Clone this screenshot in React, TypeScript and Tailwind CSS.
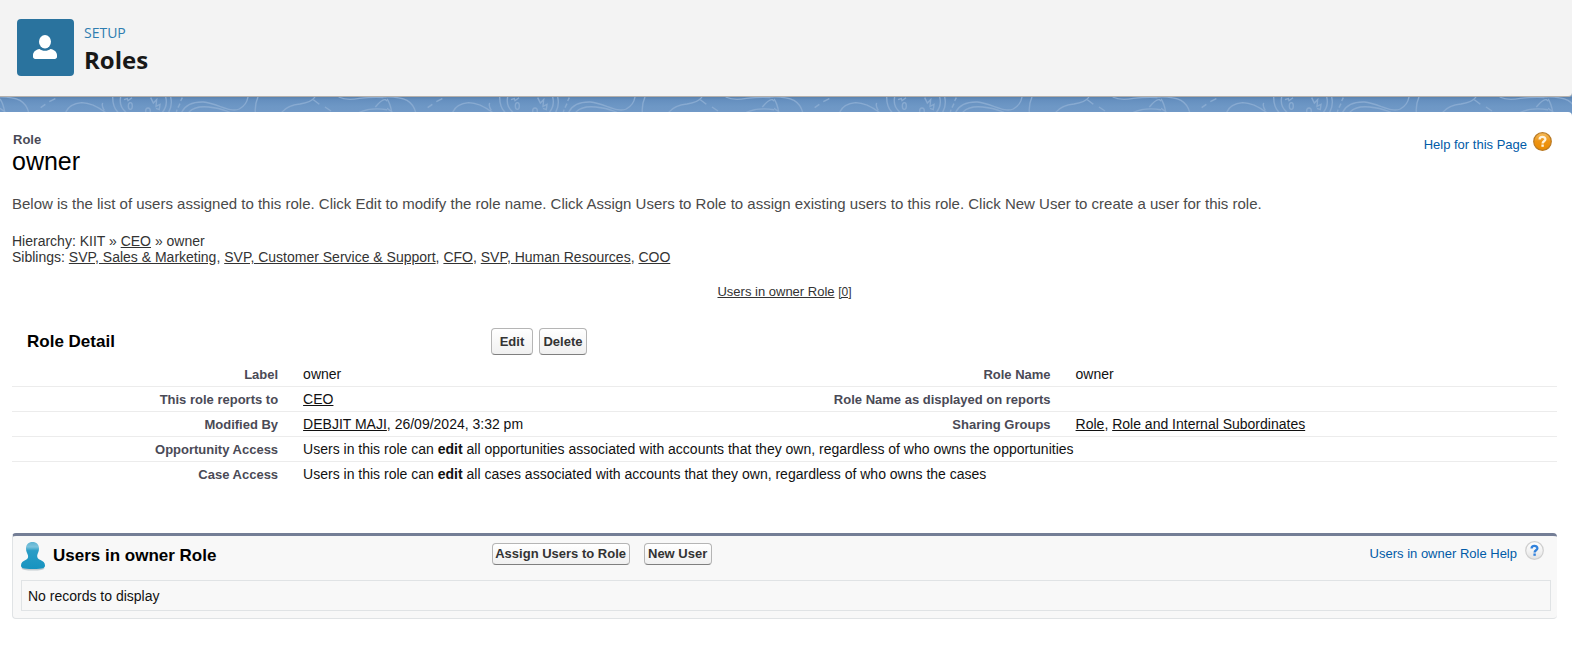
import type { ReactNode } from "react";

const link = "underline underline-offset-1";

function A({ children }: { children: ReactNode }) {
  return (
    <a href="#" className={link}>
      {children}
    </a>
  );
}

function UserIcon() {
  return (
    <span className="size-[57px] rounded bg-[#2a739e] p-4">
      <svg viewBox="0 0 24 24" className="size-6" fill="#fff" aria-hidden="true">
        <ellipse cx="12" cy="6.7" rx="6" ry="6.7" />
        <path d="M6.500 14C8 15.200 9.800 15.800 12 15.800S16 15.200 17.500 14C21.200 14.600 24 17 24 20.200V21.800C24 23.100 23 24 21.800 24H2.200C1 24 0 23.100 0 21.800V20.200C0 17 2.800 14.600 6.500 14z" />
      </svg>
    </span>
  );
}

function MapStrip() {
  return (
    <svg className="block h-[15px] w-full" aria-hidden="true">
      <defs>
        <linearGradient id="sky" x1="0" y1="0" x2="0" y2="1">
          <stop offset="0" stopColor="#5b82ad" />
          <stop offset="0.2" stopColor="#658fbf" />
          <stop offset="0.6" stopColor="#6d97c5" />
          <stop offset="1" stopColor="#7199c7" />
        </linearGradient>
        <pattern id="map" width="387" height="15" patternUnits="userSpaceOnUse">
          <g transform="scale(0.33333)" fill="none" stroke="#88aad1" strokeWidth="4">
            <path d="M0 6Q10 20 14 45M0 34L16 45" />
            <path d="M-22 0Q35 -2 60 10Q80 22 86 46" />
            <path d="M1139 0Q1165 0 1161 2" />
            <path d="M122 32l14 -10M148 14l18 -9" />
            <path d="M197 46Q208 20 245 17Q278 18 316 46M308 18Q304 28 313 40" />
            <path d="M338 0Q338 30 354 46M362 0Q356 28 378 46" />
            <ellipse cx="391" cy="27" rx="6" ry="10" />
            <path d="M372 8l10 -3l2 6l12 -9M452 2l8 16l10 -10l-2 20l12 -6l-2 16l-10 -4" />
            <ellipse cx="444" cy="42" rx="7" ry="9" />
            <path d="M497 0Q504 26 487 46M512 0Q518 26 506 46" />
            <path d="M547 2l-5 10M540 20l-6 12M531 38l-2 8" />
            <path d="M545 46Q560 14 610 15C655 20 690 48 718 36Q740 24 744 0" />
            <path d="M566 46Q584 26 626 30Q660 33 690 46" />
            <path d="M774 0Q764 22 766 46" />
            <path d="M845 46Q864 24 900 21Q935 16 945 0" />
            <path d="M940 8l18 14M975 30l18 12" />
            <path d="M1016 0Q1040 12 1078 4Q1120 0 1150 2" />
            <path d="M1078 46Q1120 28 1180 42" />
            <path d="M1126 30Q1146 6 1156 8Q1170 16 1174 40" />
          </g>
        </pattern>
      </defs>
      <rect width="100%" height="15" fill="url(#sky)" />
      <rect width="100%" height="15" fill="url(#map)" />
    </svg>
  );
}

function HelpBall({ tone }: { tone: "orange" | "gray" }) {
  const orange = tone === "orange";
  return (
    <svg viewBox="0 0 19 19" className="size-[19px]" aria-hidden="true">
      <defs>
        <linearGradient id={"ball-" + tone} x1="0" y1="0" x2="0" y2="1">
          <stop offset="0" stopColor={orange ? "#f6bd5c" : "#ffffff"} />
          <stop offset="0.5" stopColor={orange ? "#ee9413" : "#f3f3f3"} />
          <stop offset="1" stopColor={orange ? "#e98a00" : "#e2e2e2"} />
        </linearGradient>
      </defs>
      <circle cx="9.500" cy="9.500" r="8.800" fill={`url(#ball-${tone})`} stroke={orange ? "#b97a25" : "#cfcfcf"} strokeWidth="1.200" />
      <path
        d="M6.600 7.400C6.600 4.200 12.400 4.200 12.400 7.200C12.400 9.300 9.600 9.200 9.600 11.400"
        fill="none"
        stroke={orange ? "#fff3dc" : "#3282dc"}
        strokeWidth="2.300"
      />
      <rect x="8.400" y="12.500" width="2.400" height="2.300" fill={orange ? "#fff3dc" : "#3282dc"} />
    </svg>
  );
}

function PersonIcon() {
  return (
    <svg viewBox="1 0 25 30" className="h-[30px] w-[25px]" aria-hidden="true">
      <defs>
        <linearGradient id="person" x1="0" y1="0" x2="0" y2="1">
          <stop offset="0" stopColor="#5fb3d2" />
          <stop offset="0.18" stopColor="#7cc3dc" />
          <stop offset="0.32" stopColor="#2a9dc6" />
          <stop offset="1" stopColor="#1793c0" />
        </linearGradient>
      </defs>
      <ellipse cx="13" cy="27.500" rx="11.500" ry="2" fill="#c3cbd0" />
      <path
        d="M12.500 1C8.500 1 6 3.500 6 7.500C6 11 7.500 12.500 8 14.500C8.500 17 7.500 18 5.500 19C3 20.200 1 21.500 1 24.500C1 27 2.500 28 13 28S25 27 25 24.500C25 21.500 23 20.200 20.500 19C18 18 17 17 17.200 14.500C17.500 12.500 19 11 19 7.500C19 3.500 16.500 1 12.500 1z"
        fill="url(#person)"
      />
    </svg>
  );
}

function Button({ children, className }: { children: ReactNode; className: string }) {
  return (
    <button
      type="button"
      className={
        "rounded-[4px] border border-[#b5b5b5] border-b-[#7f7f7f] bg-linear-to-b from-white to-[#f0f0f0] pt-px text-[13px] font-bold text-[#333] " +
        className
      }
    >
      {children}
    </button>
  );
}

const th = "pr-3 pt-px text-right align-top text-[13px] leading-[23px] font-bold text-[#4a4a56]";
const td = "pl-[13px] pt-px align-top leading-[23px]";

function Access({ what }: { what: string }) {
  return (
    <>
      Users in this role can <b>edit</b> all {what} associated with accounts that they own, regardless of who owns the {what}
    </>
  );
}

export default function App() {
  return (
    <div className="min-h-screen bg-white font-['Liberation_Sans',Arial,sans-serif] text-sm text-[#111]">
      <div className="bg-[#6d97c5]">
        <header className="flex h-[97px] items-start gap-[10px] rounded-br border-b border-[#b4b0ac] bg-[#f3f3f3] pt-[19px] pl-[17px]">
          <UserIcon />
          <div className="pt-[3px] font-['Open_Sans','Noto_Sans',sans-serif]">
            <p className="text-sm leading-[22px] text-[#2f7db0]">SETUP</p>
            <h1 className="text-2xl leading-8 font-bold text-[#181818]">Roles</h1>
          </div>
        </header>
        <MapStrip />
        <div className="h-1 rounded-tr bg-white" />
      </div>

      <main className="pt-4 pr-[15px] pl-3">
        <div className="flex items-start justify-between">
          <div>
            <p className="pl-px text-[13px] leading-4 font-bold text-[#4a4a56]">Role</p>
            <h2 className="text-[25px] leading-[27px] text-black">owner</h2>
          </div>
          <a href="#" className="flex gap-[6px] pr-[5px] text-[13px] leading-[26px] text-[#015ba7]">
            Help for this Page
            <HelpBall tone="orange" />
          </a>
        </div>

        <p className="mt-5 text-[15px] leading-[18px] text-[#4a4a4a]">
          Below is the list of users assigned to this role. Click Edit to modify the role name. Click Assign Users to Role
          to assign existing users to this role. Click New User to create a user for this role.
        </p>

        <div className="mt-5 leading-4 text-[#333]">
          <p>
            Hierarchy: KIIT » <A>CEO</A> » owner
          </p>
          <p>
            Siblings: <A>SVP, Sales &amp; Marketing</A>, <A>SVP, Customer Service &amp; Support</A>, <A>CFO</A>,{" "}
            <A>SVP, Human Resources</A>, <A>COO</A>
          </p>
        </div>

        <p className="mt-[19px] text-center text-[13px] leading-4 text-[#333]">
          <a href="#" className={link}>
            Users in owner Role
          </a>{" "}
          <a href="#" className="text-xs underline underline-offset-1">
            [0]
          </a>
        </p>

        <section className="mt-7">
          <div className="flex items-center">
            <h3 className="w-[31%] pl-[15px] text-[17px] leading-6 font-bold text-black">Role Detail</h3>
            <div className="flex gap-[6px]">
              <Button className="h-[27px] w-[42px]">Edit</Button>
              <Button className="h-[27px] w-12">Delete</Button>
            </div>
          </div>
          <table className="mt-[7px] w-full table-fixed border-collapse">
            <colgroup>
              <col className="w-[18%]" />
              <col className="w-[32%]" />
              <col className="w-[18%]" />
              <col className="w-[32%]" />
            </colgroup>
            <tbody className="divide-y divide-[#ececec]">
              <tr>
                <th className={th}>Label</th>
                <td className={td}>owner</td>
                <th className={th}>Role Name</th>
                <td className={td}>owner</td>
              </tr>
              <tr>
                <th className={th}>This role reports to</th>
                <td className={td}>
                  <A>CEO</A>
                </td>
                <th className={th}>Role Name as displayed on reports</th>
                <td className={td} />
              </tr>
              <tr>
                <th className={th}>Modified By</th>
                <td className={td}>
                  <A>DEBJIT MAJI</A>, 26/09/2024, 3:32 pm
                </td>
                <th className={th}>Sharing Groups</th>
                <td className={td}>
                  <A>Role</A>, <A>Role and Internal Subordinates</A>
                </td>
              </tr>
              <tr>
                <th className={th}>Opportunity Access</th>
                <td className={td} colSpan={3}>
                  <Access what="opportunities" />
                </td>
              </tr>
              <tr>
                <th className={th}>Case Access</th>
                <td className={td} colSpan={3}>
                  <Access what="cases" />
                </td>
              </tr>
            </tbody>
          </table>
        </section>

        <section className="mt-[47px] rounded border border-t-[3px] border-r-0 border-[#e0e3e5] border-t-[#747e96] bg-[#f8f8f8] pb-[7px]">
          <div className="flex h-11 items-start">
            <div className="flex w-[31%] items-center gap-[7px] pt-[5px] pl-2">
              <PersonIcon />
              <h3 className="text-[17px] leading-6 font-bold text-black">Users in owner Role</h3>
            </div>
            <div className="flex gap-[14px] pt-[7px]">
              <Button className="h-[22px] w-[138px]">Assign Users to Role</Button>
              <Button className="h-[22px] w-[68px]">New User</Button>
            </div>
            <a href="#" className="ml-auto flex gap-2 pt-[5px] pr-[13px] text-[13px] leading-[26px] text-[#015ba7]">
              Users in owner Role Help
              <HelpBall tone="gray" />
            </a>
          </div>
          <p className="mr-[6px] ml-2 border border-[#e0e3e5] px-[6px] pt-px leading-7">No records to display</p>
        </section>
      </main>
    </div>
  );
}
